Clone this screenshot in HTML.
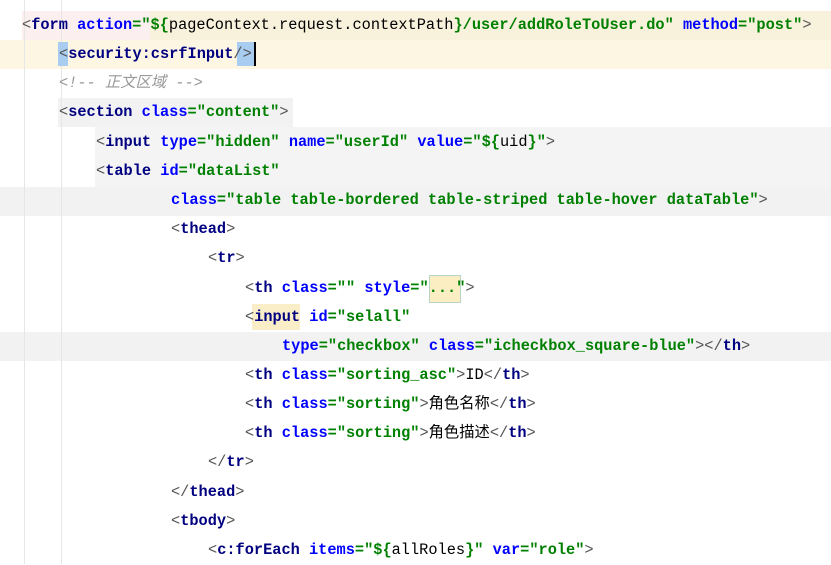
<!DOCTYPE html>
<html><head><meta charset="utf-8"><style>
body{margin:0;width:831px;height:564px;background:#fff;overflow:hidden;position:relative;font-family:"Liberation Mono","Noto Sans CJK SC",monospace;}
.l{position:absolute;left:0;width:831px;height:29px;line-height:29px;font-size:15.3px;white-space:pre;font-weight:bold;margin-top:2px}
.t{color:#000080}.a{color:#0000ff}.v{color:#008000}.p{color:#555;font-weight:normal}
.c{color:#999;font-style:italic;font-weight:normal}
.n{color:#000;font-weight:normal}
.g{position:absolute;top:0;width:1px;height:564px;background:#e6e6e6}
</style></head><body>
<div style="position:absolute;left:0;top:40px;width:831px;height:29px;background:#fdf6e3"></div>
<div style="position:absolute;left:22px;top:11px;width:128px;height:29px;background:#fcefef"></div>
<div style="position:absolute;left:150px;top:11px;width:681px;height:29px;background:#f8f1dc"></div>
<div style="position:absolute;left:0;top:187px;width:831px;height:29px;background:#f2f2f2"></div>
<div style="position:absolute;left:0;top:332px;width:831px;height:29px;background:#f2f2f2"></div>
<div style="position:absolute;left:58px;top:98px;width:235px;height:29px;background:#f2f2f2"></div>
<div style="position:absolute;left:95px;top:127px;width:736px;height:60px;background:#f4f4f4"></div>
<div class="g" style="left:24px"></div><div class="g" style="left:61px"></div>
<div style="position:absolute;left:58px;top:42px;width:10px;height:24px;background:#a8cdf0"></div>
<div style="position:absolute;left:237px;top:42px;width:17px;height:24px;background:#a8cdf0"></div>
<div style="position:absolute;left:254px;top:42px;width:2px;height:24px;background:#000"></div>
<div style="position:absolute;left:429px;top:275px;width:30px;height:26px;background:#fbeec2;border:1px solid #b7d4c4"></div>
<div style="position:absolute;left:252px;top:304px;width:48px;height:26px;background:#faeec8"></div>

<div class="l" style="top:9px;left:22px"><span class="p">&lt;</span><span class="t">form</span> <span class="a">action</span><span class="v">="${</span><span class="n">pageContext.request.contextPath</span><span class="v">}/user/addRoleToUser.do"</span> <span class="a">method</span><span class="v">="post"</span><span class="p">&gt;</span></div>
<div class="l" style="top:38px;left:59px"><span class="p">&lt;</span><span class="t">security:csrfInput</span><span class="p">/&gt;</span></div>
<div class="l" style="top:67px;left:59px"><span class="c">&lt;!-- 正文区域 --&gt;</span></div>
<div class="l" style="top:96px;left:59px"><span class="p">&lt;</span><span class="t">section</span> <span class="a">class</span><span class="v">="content"</span><span class="p">&gt;</span></div>
<div class="l" style="top:126px;left:96px"><span class="p">&lt;</span><span class="t">input</span> <span class="a">type</span><span class="v">="hidden"</span> <span class="a">name</span><span class="v">="userId"</span> <span class="a">value</span><span class="v">="${</span><span class="n">uid</span><span class="v">}"</span><span class="p">&gt;</span></div>
<div class="l" style="top:155px;left:96px"><span class="p">&lt;</span><span class="t">table</span> <span class="a">id</span><span class="v">="dataList"</span></div>
<div class="l" style="top:184px;left:171px"><span class="a">class</span><span class="v">="table table-bordered table-striped table-hover dataTable"</span><span class="p">&gt;</span></div>
<div class="l" style="top:213px;left:171px"><span class="p">&lt;</span><span class="t">thead</span><span class="p">&gt;</span></div>
<div class="l" style="top:242px;left:208px"><span class="p">&lt;</span><span class="t">tr</span><span class="p">&gt;</span></div>
<div class="l" style="top:272px;left:245px"><span class="p">&lt;</span><span class="t">th</span> <span class="a">class</span><span class="v">=""</span> <span class="a">style</span><span class="v">="...</span><span class="v">"</span><span class="p">&gt;</span></div>
<div class="l" style="top:301px;left:245px"><span class="p">&lt;</span><span class="t">input</span> <span class="a">id</span><span class="v">="selall"</span></div>
<div class="l" style="top:330px;left:282px"><span class="a">type</span><span class="v">="checkbox"</span> <span class="a">class</span><span class="v">="icheckbox_square-blue"</span><span class="p">&gt;&lt;/</span><span class="t">th</span><span class="p">&gt;</span></div>
<div class="l" style="top:359px;left:245px"><span class="p">&lt;</span><span class="t">th</span> <span class="a">class</span><span class="v">="sorting_asc"</span><span class="p">&gt;</span><span class="n">ID</span><span class="p">&lt;/</span><span class="t">th</span><span class="p">&gt;</span></div>
<div class="l" style="top:388px;left:245px"><span class="p">&lt;</span><span class="t">th</span> <span class="a">class</span><span class="v">="sorting"</span><span class="p">&gt;</span><span class="n">角色名称</span><span class="p">&lt;/</span><span class="t">th</span><span class="p">&gt;</span></div>
<div class="l" style="top:417px;left:245px"><span class="p">&lt;</span><span class="t">th</span> <span class="a">class</span><span class="v">="sorting"</span><span class="p">&gt;</span><span class="n">角色描述</span><span class="p">&lt;/</span><span class="t">th</span><span class="p">&gt;</span></div>
<div class="l" style="top:446px;left:208px"><span class="p">&lt;/</span><span class="t">tr</span><span class="p">&gt;</span></div>
<div class="l" style="top:476px;left:171px"><span class="p">&lt;/</span><span class="t">thead</span><span class="p">&gt;</span></div>
<div class="l" style="top:505px;left:171px"><span class="p">&lt;</span><span class="t">tbody</span><span class="p">&gt;</span></div>
<div class="l" style="top:534px;left:208px"><span class="p">&lt;</span><span class="t">c:forEach</span> <span class="a">items</span><span class="v">="${</span><span class="n">allRoles</span><span class="v">}"</span> <span class="a">var</span><span class="v">="role"</span><span class="p">&gt;</span></div>
</body></html>
